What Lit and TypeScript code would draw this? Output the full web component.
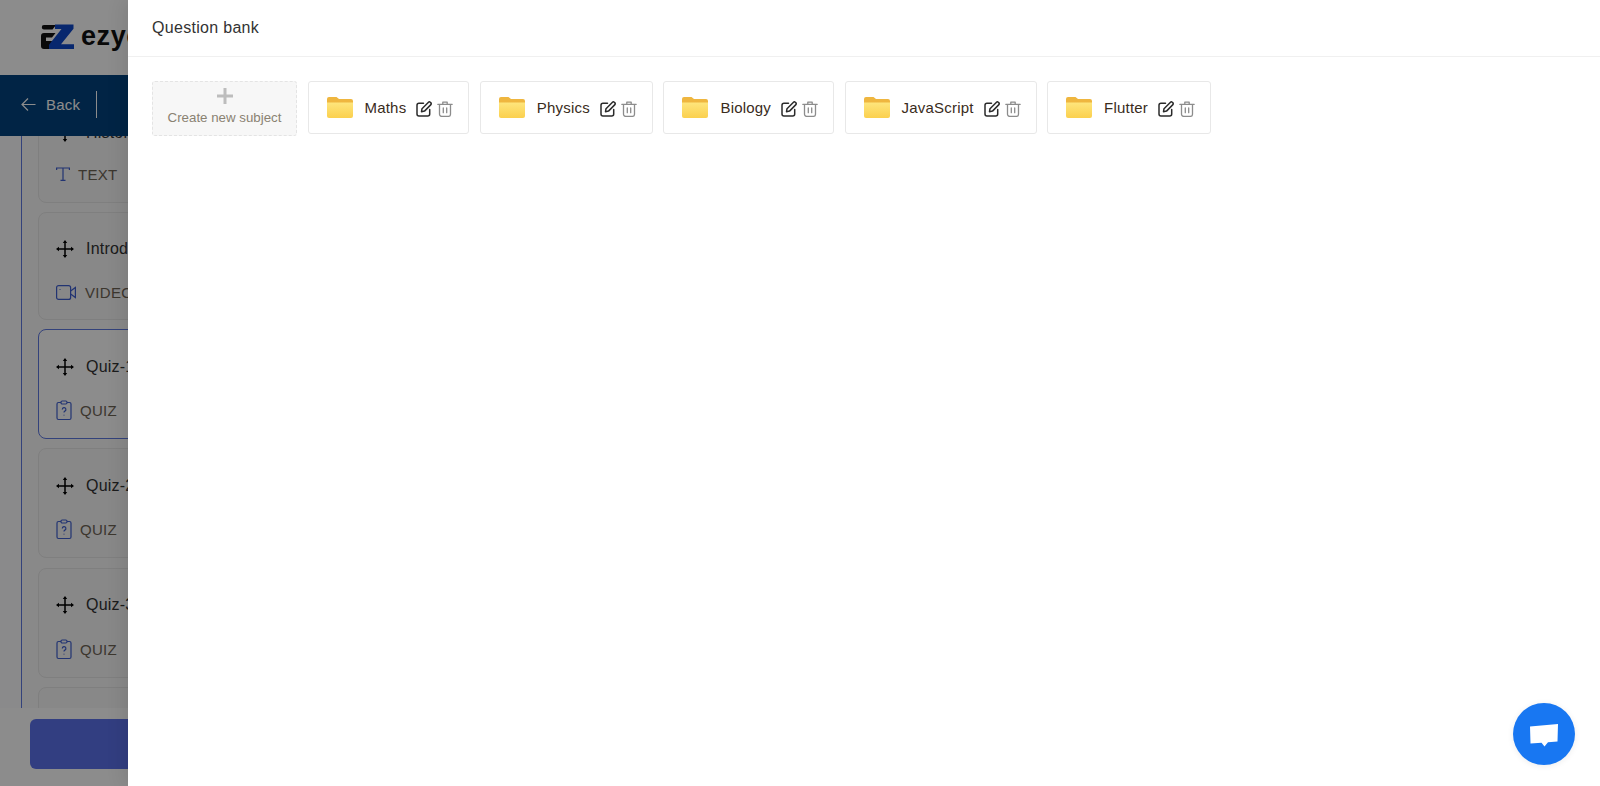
import { LitElement, html, css, svg } from "lit";
import { customElement } from "lit/decorators.js";

const moveIcon = html`<svg class="move" viewBox="0 0 18 18" fill="#000" stroke="#000"><path d="M9 1.500v15M1.500 9h15" stroke-width="1.500" fill="none"/><path d="M9 0l2.200 3H6.800zM9 18l2.200-3H6.800zM0 9l3-2.200v4.400zM18 9l-3-2.200v4.400z" stroke="none"/></svg>`;
const quizIcon = html`<svg class="ti quiz" viewBox="0 0 16 21" fill="none" stroke="#3f5fd0" stroke-width="1.200"><path d="M5 2.500H2.500a1.500 1.500 0 0 0-1.500 1.500v14a1.500 1.500 0 0 0 1.500 1.500h11a1.500 1.500 0 0 0 1.500-1.500V4a1.500 1.500 0 0 0-1.500-1.500H11"/><rect x="5" y="1" width="6" height="3" rx="1.200"/><path d="M6.300 9.500a1.800 1.800 0 1 1 2.600 1.600c-.6.300-.9.700-.9 1.400M8 14.800v.6"/></svg>`;
const folder = svg`<svg class="folder" viewBox="0 0 26 21"><defs><linearGradient id="fg" x1="0" y1="0" x2="0" y2="1"><stop offset="0" stop-color="#fee57c"/><stop offset="1" stop-color="#fbd04e"/></linearGradient></defs><path d="M2 0h7.500l2.500 2h12a2 2 0 0 1 2 2v4H0V2a2 2 0 0 1 2-2z" fill="#efb63f"/><path d="M0 5.500h26V19a2 2 0 0 1-2 2H2a2 2 0 0 1-2-2z" fill="url(#fg)"/></svg>`;
const editIcon = html`<svg class="act" viewBox="0 0 16 16" fill="none" stroke="#2b2b2b" stroke-width="1.500" stroke-linecap="round" stroke-linejoin="round"><path d="M7.500 2.300H3a2 2 0 0 0-2 2V13a2 2 0 0 0 2 2h8.700a2 2 0 0 0 2-2V8.500"/><path d="M5.500 10.700l.5-3L12.500 1.200a1.200 1.200 0 0 1 1.700 0l.7.7a1.200 1.200 0 0 1 0 1.700L8.500 10.100z"/></svg>`;
const trashIcon = html`<svg class="act" viewBox="0 0 16 16" fill="none" stroke="#8c8c8c" stroke-width="1.300" stroke-linecap="round" stroke-linejoin="round"><path d="M.8 3.300h14.400M5.800 3.200V1.200h4.400v2M2.500 3.500v9.700a2.200 2.200 0 0 0 2.200 2.200h6.600a2.200 2.200 0 0 0 2.200-2.200V3.500M6.300 7v4.700M9.700 7v4.700"/></svg>`;

const lessons = [
  { title: "History", type: "TEXT", kind: "text", active: false },
  { title: "Introduction", type: "VIDEO", kind: "video", active: false },
  { title: "Quiz-1", type: "QUIZ", kind: "quiz", active: true },
  { title: "Quiz-2", type: "QUIZ", kind: "quiz", active: false },
  { title: "Quiz-3", type: "QUIZ", kind: "quiz", active: false },
  { title: "Quiz-4", type: "QUIZ", kind: "quiz", active: false },
];
const subjects = ["Maths", "Physics", "Biology", "JavaScript", "Flutter"];

@customElement("app-root")
export class AppRoot extends LitElement {
  static styles = css`
    :host { display: block; height: 786px; overflow: hidden; position: relative; background: #fff;
      font-family: "Liberation Sans", Arial, sans-serif; color: #262626; }
    .page { display: flex; flex-direction: column; height: 786px; background: #fbfbfd; }
    .top { height: 75px; flex: none; display: flex; align-items: center; padding-left: 41px; gap: 7px; background: #fff; }
    .logo { width: 33px; height: 25px; margin-top: -3px; }
    .brand { font-size: 27px; font-weight: 700; color: #111; letter-spacing: .6px; margin-top: -2px; }
    .nav { height: 61px; box-sizing: border-box; padding: 0 0 2px 21px; flex: none; background: #03427e; display: flex; align-items: center; color: #fff; font-size: 15px; letter-spacing: .25px; }
    .nav svg { width: 15px; height: 15px; margin-right: 10px; }
    .nav .sep { width: 1px; height: 27px; background: #fff; margin-left: 16px; }
    .body { flex: 1; min-height: 0; overflow: hidden; margin-left: 21px; border-left: 1.500px solid #5e78e0; padding-left: 16px; background: #fafafa; }
    .list { margin-top: -41px; display: flex; flex-direction: column; gap: 9.300px; width: 300px; }
    .card { height: 110px; box-sizing: border-box; border: 1px solid #e8e8e8; border-radius: 8px; background: #f7f7f7; padding: 0 17px; display: flex; flex-direction: column; }
    .card.short { height: 107.700px; }
    .card.active { border-color: #5e78e0; background: #fff; }
    .row1 { display: flex; align-items: center; gap: 12px; font-size: 16px; letter-spacing: .2px; height: 65px; padding-top: 4px; flex: none; color: #333; }
    .card:not(.short) .row1 { height: 65.700px; }
    .row2 { display: flex; align-items: center; gap: 9px; font-size: 15px; letter-spacing: .3px; height: 22px; color: #6e6455; }
    .row2.text { margin-top: -2px; gap: 8px; }
    .move { width: 18px; height: 18px; }
    .ti { flex: none; }
    .ti.quiz { width: 16px; height: 21px; margin-right: -1px; }
    .ti.video { width: 20px; height: 15px; }
    .ti.text { width: 14px; height: 14px; }
    .foot { height: 78px; flex: none; background: #fff; padding: 11px 0 0 30px; box-sizing: border-box; }
    .save { width: 400px; height: 50px; border-radius: 6px; background: #5c72ec; }

    .mask { position: absolute; inset: 0; background: rgba(0, 0, 0, .45); }
    .drawer { position: absolute; top: 0; right: 0; bottom: 0; width: 1472px; background: #fff; box-shadow: -6px 0 16px rgba(0, 0, 0, .08); }
    .dh { height: 57px; box-sizing: border-box; border-bottom: 1px solid #f0f0f0; padding: 0 24px; display: flex; align-items: center; font-size: 16px; letter-spacing: .3px; color: #333; }
    .db { padding: 24px; display: flex; gap: 10.500px; align-items: flex-start; }
    .create { width: 145px; height: 55px; box-sizing: border-box; border: 1px dashed #e4e4e4; border-radius: 3px; background: #f7f7f7; display: flex; flex-direction: column; align-items: center; font-size: 13.300px; color: #8a8272; padding-top: 6px; }
    .plus { width: 16px; height: 16px; margin-bottom: 6px; }
    .subject { height: 53px; box-sizing: border-box; border: 1px solid #e8e8e8; border-radius: 3px; background: #fff; display: flex; align-items: center; padding: 0 15px 0 18px; font-size: 15px; letter-spacing: .2px; color: #3a2c1c; }
    .folder { width: 26px; height: 21px; margin-right: 12px; flex: none; }
    .name { margin-right: 10px; margin-top: -1px; }
    .acts { display: flex; gap: 5px; margin-top: 2px; }
    .act { width: 16px; height: 16px; }
    .chat { position: absolute; left: 1513px; top: 703px; width: 62px; height: 62px; border-radius: 50%; background: #1877f2; display: flex; align-items: center; justify-content: center; box-shadow: 0 1px 6px rgba(0, 0, 0, .08); }
    .chat svg { width: 30px; height: 26px; margin-top: 3px; }
  `;

  private typeIcon(kind: string) {
    if (kind === "quiz") return quizIcon;
    if (kind === "video")
      return html`<svg class="ti video" viewBox="0 0 20 15" fill="none" stroke="#3f5fd0" stroke-width="1.200"><rect x=".6" y=".6" width="14" height="13.800" rx="2"/><path d="M14.600 6L19.400 2.500v10l-4.800-3.500"/><path d="M4 4v.8"/></svg>`;
    return html`<svg class="ti text" viewBox="0 0 14 14" fill="none" stroke="#3f5fd0" stroke-width="1.200"><path d="M.6 3V1h12.800v2M7 1v12M4.500 13.400h5"/></svg>`;
  }

  render() {
    return html`
      <div class="page">
        <div class="top">
          <svg class="logo" viewBox="0 0 33 25">
            <path d="M3 1h12l-3.500 4.500H3a2.200 2.200 0 0 1-2.200-2.200A2.200 2.200 0 0 1 3 1z" fill="#111"/>
            <path d="M3 9h11.500L11 13.500H5V17h6l-1 8H3a3 3 0 0 1-3-3V12a3 3 0 0 1 3-3z" fill="#111"/>
            <path d="M14 .5h18.500v4.300L20 20.300h13V25H8v-4.300L20.500 5H14z" fill="#0d47c9"/>
          </svg>
          <span class="brand">ezycourse</span>
        </div>
        <div class="nav">
          <svg viewBox="0 0 15 15" fill="none" stroke="#fff" stroke-width="1.200"><path d="M14.500 7.500H1M7 1.500l-6 6 6 6"/></svg>
          <span>Back</span><span class="sep"></span>
        </div>
        <div class="body">
          <div class="list">
            ${lessons.map(
              (l) => html`<div class="card ${l.active ? "active" : ""} ${l.kind === "quiz" ? "" : "short"}">
                <div class="row1">${moveIcon}<span>${l.title}</span></div>
                <div class="row2 ${l.kind}">${this.typeIcon(l.kind)}<span>${l.type}</span></div>
              </div>`
            )}
          </div>
        </div>
        <div class="foot"><div class="save"></div></div>
      </div>
      <div class="mask"></div>
      <div class="drawer">
        <div class="dh">Question bank</div>
        <div class="db">
          <div class="create">
            <svg class="plus" viewBox="0 0 16 16" fill="#bdbdbd"><path d="M6.500 0h3v6.500H16v3H9.500V16h-3V9.500H0v-3h6.500z"/></svg>
            <span>Create new subject</span>
          </div>
          ${subjects.map(
            (s) => html`<div class="subject">${folder}<span class="name">${s}</span><span class="acts">${editIcon}${trashIcon}</span></div>`
          )}
        </div>
      </div>
      <div class="chat">
        <svg viewBox="0 0 30 26" fill="#fff"><path d="M1 3.500L29 1l-.5 17.500-9.500.8-3.500 4.200-3-3.700-11 .7z"/></svg>
      </div>
    `;
  }
}
